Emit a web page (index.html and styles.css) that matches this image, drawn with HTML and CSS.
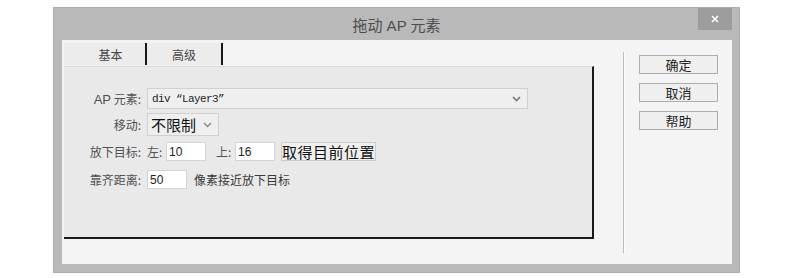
FILE: index.html
```html
<!DOCTYPE html>
<html lang="zh-CN">
<head>
<meta charset="utf-8">
<title>拖动 AP 元素</title>
<link rel="stylesheet" href="styles.css">
</head>
<body>
<div class="window">
  <div class="titlebar">
    <span class="title">拖动 AP 元素</span>
    <span class="close">
      <svg width="10" height="10" viewBox="0 0 10 10"><path d="M2 2 L8 8 M8 2 L2 8" stroke="#fff" stroke-width="1.6"/></svg>
    </span>
  </div>
  <div class="client">
    <div class="main">
      <div class="tabs">
        <div class="tab tab-first">基本</div>
        <div class="tab">高级</div>
      </div>
      <div class="panel">
        <div class="row row1">
          <span class="label"><span class="latin">AP</span> 元素:</span>
          <div class="select select-wide">
            <span class="mono">div “Layer3”</span>
            <svg class="chev" width="9" height="6" viewBox="0 0 9 6"><path d="M1 1 L4.5 4.5 L8 1" fill="none" stroke="#777" stroke-width="1.6"/></svg>
          </div>
        </div>
        <div class="row row2">
          <span class="label">移动:</span>
          <div class="select select-small">
            <span class="big">不限制</span>
            <svg class="chev" width="9" height="6" viewBox="0 0 9 6"><path d="M1 1 L4.5 4.5 L8 1" fill="none" stroke="#888" stroke-width="1.4"/></svg>
          </div>
        </div>
        <div class="row row3">
          <span class="label">放下目标:</span>
          <div class="fields">
            <span class="sub">左:</span>
            <span class="input">10</span>
            <span class="sub sub-top">上:</span>
            <span class="input">16</span>
            <span class="btn-inline">取得目前位置</span>
          </div>
        </div>
        <div class="row row4">
          <span class="label">靠齐距离:</span>
          <div class="fields">
            <span class="input">50</span>
            <span class="note">像素接近放下目标</span>
          </div>
        </div>
      </div>
    </div>
    <div class="sep"></div>
    <div class="buttons">
      <div class="btn">确定</div>
      <div class="btn">取消</div>
      <div class="btn">帮助</div>
    </div>
  </div>
</div>
</body>
</html>
```
FILE: styles.css
```css
* { box-sizing: border-box; }
html, body {
  margin: 0;
  padding: 0;
  background: #ffffff;
  font-family: "Noto Sans CJK SC", "Liberation Sans", sans-serif;
  font-size: 12px;
  color: #444;
}
.window {
  margin: 7px 0 0 53px;
  width: 687px;
  height: 266px;
  background: #b9b9b9;
  border: 1px solid #adadad;
  display: flex;
  flex-direction: column;
}
.titlebar {
  height: 32px;
  position: relative;
  display: flex;
  align-items: center;
  justify-content: center;
}
.title {
  font-size: 15px;
  color: #4e4e4e;
  font-family: "Liberation Sans", "Noto Sans CJK SC", sans-serif;
}
.close {
  position: absolute;
  right: 7px;
  top: 0;
  width: 34px;
  height: 22px;
  background: #9d9d9d;
  display: flex;
  align-items: center;
  justify-content: center;
}
.client {
  margin: 0 7px 8px 8px;
  flex: 1;
  background: #f4f4f4;
  display: flex;
}
.main {
  padding: 3px 0 0 2px;
  display: flex;
  flex-direction: column;
}
.tabs {
  display: flex;
  height: 23px;
}
.tab {
  width: 76px;
  height: 22px;
  background: #ececec;
  border-right: 2px solid #1a1a1a;
  display: flex;
  align-items: center;
  justify-content: center;
  font-size: 12px;
  color: #444;
}
.tab-first {
  width: 83px;
  padding-left: 12px;
}
.panel {
  width: 530px;
  height: 173px;
  background: #e9e9e9;
  border-top: 1px solid #dadada;
  border-right: 2px solid #1a1a1a;
  border-bottom: 2px solid #1a1a1a;
  padding-top: 21px;
}
.row {
  display: flex;
  align-items: center;
}
.label {
  width: 79px;
  padding-right: 2px;
  text-align: right;
  color: #505050;
  font-size: 12px;
  flex: none;
}
.latin {
  font-family: "Liberation Sans", sans-serif;
  font-size: 13px;
}
.row1 { height: 21px; }
.row2 { height: 23px; margin-top: 4px; }
.row3 { height: 19px; margin-top: 6px; }
.row4 { height: 19px; margin-top: 9px; }
.select {
  margin-left: 4px;
  height: 100%;
  background: #efefef;
  border: 1px solid #d0d0d0;
  display: flex;
  align-items: center;
  justify-content: space-between;
  padding: 0 6px 0 4px;
}
.select-wide { width: 381px; }
.select-small { width: 72px; padding-left: 3px; }
.mono {
  font-family: "Liberation Mono", monospace;
  font-size: 11px;
  letter-spacing: -0.6px;
  color: #222;
}
.big {
  font-size: 15px;
  color: #111;
}
.fields {
  margin-left: 4px;
  display: flex;
  align-items: center;
  height: 100%;
}
.sub {
  color: #555;
  width: 19px;
}
.sub-top { margin-left: 10px; }
.input {
  width: 40px;
  height: 19px;
  background: #ffffff;
  border: 1px solid #d4d4d4;
  padding-left: 2px;
  font-family: "Liberation Sans", sans-serif;
  font-size: 12px;
  color: #222;
  display: flex;
  align-items: center;
}
.btn-inline {
  margin-left: 6px;
  width: 95px;
  height: 19px;
  background: #efefef;
  border: 1px solid #cbcbcb;
  font-size: 15px;
  letter-spacing: 0.5px;
  color: #111;
  display: flex;
  align-items: center;
  justify-content: center;
}
.note {
  margin-left: 7px;
  color: #3a3a3a;
}
.sep {
  margin: 12px 0 11px 29px;
  width: 2px;
  border-left: 1px solid #bcbcbc;
  border-right: 1px solid #ffffff;
}
.buttons {
  margin: 15px 0 0 14px;
  display: flex;
  flex-direction: column;
  gap: 9px;
}
.btn {
  width: 79px;
  height: 19px;
  background: #efefef;
  border: 1px solid #adadad;
  display: flex;
  align-items: center;
  justify-content: center;
  font-size: 13px;
  color: #222;
}
```
